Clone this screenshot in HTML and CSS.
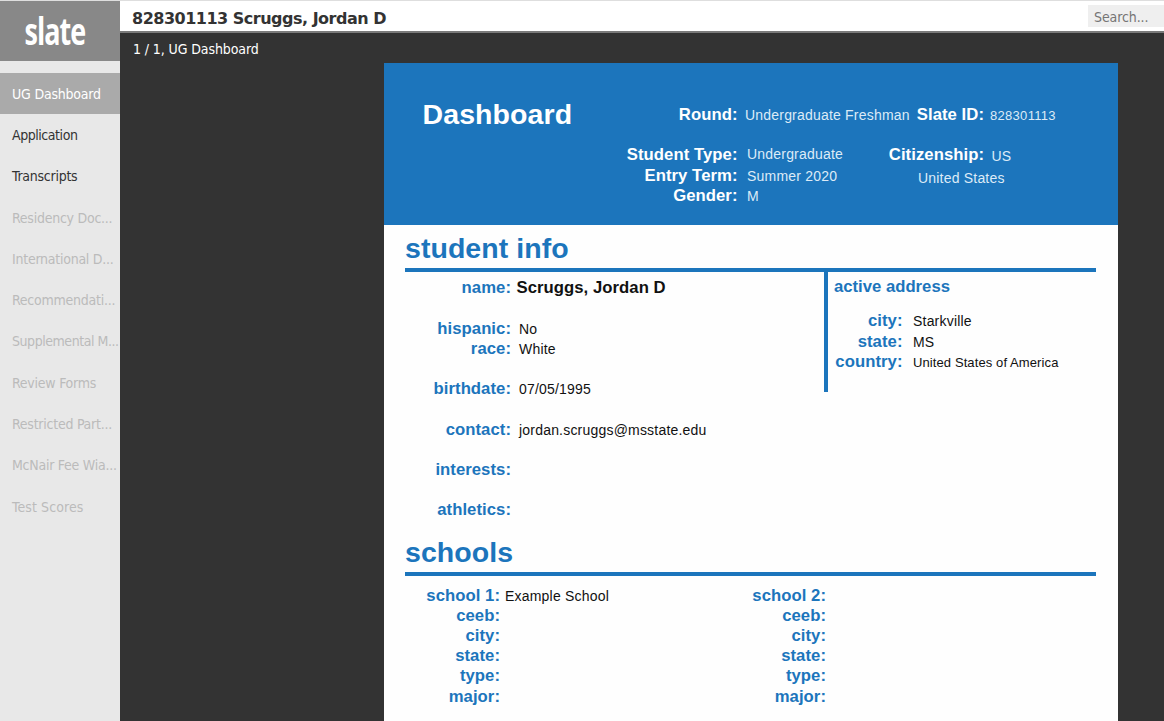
FILE: index.html
```html
<!DOCTYPE html>
<html lang="en">
<head>
<meta charset="utf-8">
<title>Slate Reader</title>
<link rel="stylesheet" href="styles.css">
</head>
<body>
<div class="app">
  <aside class="sidebar">
    <div class="logo">
      <svg width="120" height="60" viewBox="0 0 120 60" role="img" aria-label="slate"><text class="logo-text" transform="translate(24.5 43.7) scale(0.71 1)" x="0" y="0">slate</text></svg>
    </div>
    <nav class="nav">
      <a class="nav-item active">UG Dashboard</a>
      <a class="nav-item tight">Application</a>
      <a class="nav-item">Transcripts</a>
      <a class="nav-item disabled">Residency Doc...</a>
      <a class="nav-item disabled">International D...</a>
      <a class="nav-item disabled">Recommendati...</a>
      <a class="nav-item disabled tight">Supplemental M...</a>
      <a class="nav-item disabled">Review Forms</a>
      <a class="nav-item disabled">Restricted Part...</a>
      <a class="nav-item disabled">McNair Fee Wia...</a>
      <a class="nav-item disabled loose">Test Scores</a>
    </nav>
  </aside>
  <main class="main">
    <header class="topbar">
      <h1 class="title">828301113 Scruggs, Jordan D</h1>
      <div class="search">Search...</div>
    </header>
    <div class="crumb">1 / 1, UG Dashboard</div>
    <article class="sheet">
      <section class="banner">
        <h2 class="banner-title">Dashboard</h2>
        <div class="fields banner-left">
          <b>Round:</b><span class="snug">Undergraduate Freshman</span>
          <b></b><span></span>
          <b>Student Type:</b><span class="raised">Undergraduate</span>
          <b>Entry Term:</b><span>Summer 2020</span>
          <b>Gender:</b><span>M</span>
        </div>
        <div class="fields banner-right">
          <b>Slate ID:</b><span class="small id">828301113</span>
          <b></b><span></span>
          <b>Citizenship:</b><span class="code">US</span>
          <span class="wide">United States</span>
        </div>
      </section>
      <section class="info">
        <h2 class="heading">student info</h2>
        <div class="columns">
          <div class="fields personal">
            <b>name:</b><strong class="name">Scruggs, Jordan D</strong>
            <b></b><span></span>
            <b>hispanic:</b><span>No</span>
            <b>race:</b><span>White</span>
            <b></b><span></span>
            <b>birthdate:</b><span>07/05/1995</span>
            <b></b><span></span>
            <b>contact:</b><span>jordan.scruggs@msstate.edu</span>
            <b></b><span></span>
            <b>interests:</b><span></span>
            <b></b><span></span>
            <b>athletics:</b><span></span>
          </div>
          <div class="address">
            <h3 class="address-title">active address</h3>
            <div class="fields address-fields">
              <b>city:</b><span>Starkville</span>
              <b>state:</b><span>MS</span>
              <b>country:</b><span class="small">United States of America</span>
            </div>
          </div>
        </div>
      </section>
      <section class="schools">
        <h2 class="heading">schools</h2>
        <div class="columns">
          <div class="fields school">
            <b>school 1:</b><span>Example School</span>
            <b>ceeb:</b><span></span>
            <b>city:</b><span></span>
            <b>state:</b><span></span>
            <b>type:</b><span></span>
            <b>major:</b><span></span>
          </div>
          <div class="fields school">
            <b>school 2:</b><span></span>
            <b>ceeb:</b><span></span>
            <b>city:</b><span></span>
            <b>state:</b><span></span>
            <b>type:</b><span></span>
            <b>major:</b><span></span>
          </div>
        </div>
      </section>
    </article>
  </main>
</div>
</body>
</html>
```

FILE: styles.css
```css
* { box-sizing: border-box; }
body {
  margin: 0;
  height: 721px;
  overflow: hidden;
  background: #333;
  font: 14px/20px "DejaVu Sans Condensed", "Noto Sans", sans-serif;
}
h1, h2, h3 { margin: 0; }
.app {
  display: flex;
  height: 721px;
  border-top: 1px solid #dedede;
}
.sidebar {
  width: 120px;
  flex: none;
  background: #e8e8e8;
}
.logo { height: 60px; background: #888; }
.logo svg { display: block; }
.logo-text {
  font: 700 38px "Open Sans", sans-serif;
  letter-spacing: -1.4px;
  fill: #fff;
}
.nav { padding-top: 12px; }
.nav-item {
  display: block;
  height: 41.3px;
  padding-left: 12px;
  line-height: 42.8px;
  letter-spacing: -0.25px;
  white-space: nowrap;
  color: #333;
}
.nav-item.active { height: 41px; background: #aaa; color: #fff; letter-spacing: -0.2px; }
.nav-item.disabled { color: #bbb; }
.nav-item.tight { letter-spacing: -0.45px; }
.nav-item.loose { letter-spacing: 0.1px; }
.main { flex: 1; min-width: 0; }
.topbar {
  display: flex;
  justify-content: space-between;
  height: 32px;
  padding: 4px 0 0 12px;
  background: #fff;
  border-bottom: 2px solid #7b7b7b;
}
.title {
  color: #333;
  font-family: "DejaVu Sans", sans-serif;
  font-size: 16px;
  line-height: 27px;
  letter-spacing: -0.5px;
}
.search {
  width: 76px;
  height: 22px;
  padding-left: 6px;
  background: #efefef;
  color: #757575;
  line-height: 24px;
  letter-spacing: -0.1px;
}
.crumb {
  height: 30px;
  padding: 6px 0 0 13px;
  color: #fff;
  letter-spacing: -0.1px;
}
.sheet {
  width: 734px;
  height: 658px;
  margin-left: 264px;
  background: #fefefe;
  color: #111;
  font-family: "Liberation Sans", Arial, sans-serif;
}
.fields {
  display: grid;
  grid-auto-rows: 20.2px;
  line-height: 20px;
  white-space: nowrap;
  letter-spacing: 0.2px;
}
.fields b {
  color: #1c75bc;
  font-size: 16.7px;
  letter-spacing: 0.05px;
  text-align: right;
}
.fields span { padding: 0 0 0 8px; }
.fields .small { font-size: 13px; }
.banner {
  display: flex;
  height: 161.5px;
  padding: 42px 0 0 38.5px;
  background: #1c75bc;
  color: #fff;
}
.banner .fields b { color: #fff; }
.banner .fields span { padding-left: 9.5px; color: #dcebf7; }
.banner-title {
  width: 199px;
  margin-top: -1px;
  font-size: 28.5px;
  line-height: 20px;
  letter-spacing: 0.1px;
}
.banner-left { width: 266px; grid-template-columns: 116px 1fr; }
.banner-right { grid-template-columns: 96.5px 1fr; }
.banner .fields .snug { padding: 0 0 0 7.5px; }
.banner .fields .raised { margin-top: -1px; }
.banner .fields .wide { grid-column: 1 / 3; padding: 2px 0 0 30.5px; }
.banner .fields .id { padding: 1px 0 0 6px; letter-spacing: 0.3px; }
.banner .fields .code { padding: 1px 0 0 7.5px; }
.heading {
  height: 47.5px;
  padding-top: 7px;
  border-bottom: 4px solid #1c75bc;
  color: #1c75bc;
  font-size: 28.5px;
  line-height: 32px;
  letter-spacing: 0.05px;
}
.info { height: 304px; padding: 0 22px 0 21px; }
.schools { padding: 0 22px 0 21px; }
.columns { display: flex; }
.personal {
  width: 419px;
  padding-top: 6.4px;
  grid-template-columns: 106px 1fr;
}
.fields .name {
  padding-left: 5.5px;
  font-size: 16.7px;
  letter-spacing: 0.05px;
}
.address {
  height: 120px;
  padding: 5px 0 0 6px;
  border-left: 4px solid #1c75bc;
}
.address-title {
  height: 34.3px;
  color: #1c75bc;
  font-size: 16.7px;
  line-height: 20px;
  letter-spacing: 0;
}
.address-fields { grid-template-columns: 68.5px 1fr; grid-auto-rows: 20.6px; }
.address-fields span { padding: 0 0 0 10.5px; }
.address-fields .small { padding-top: 1px; letter-spacing: 0.1px; }
.school {
  width: 326px;
  padding-top: 9.6px;
  grid-template-columns: 95px 1fr;
}
.fields.school span { padding-left: 5px; }
```
